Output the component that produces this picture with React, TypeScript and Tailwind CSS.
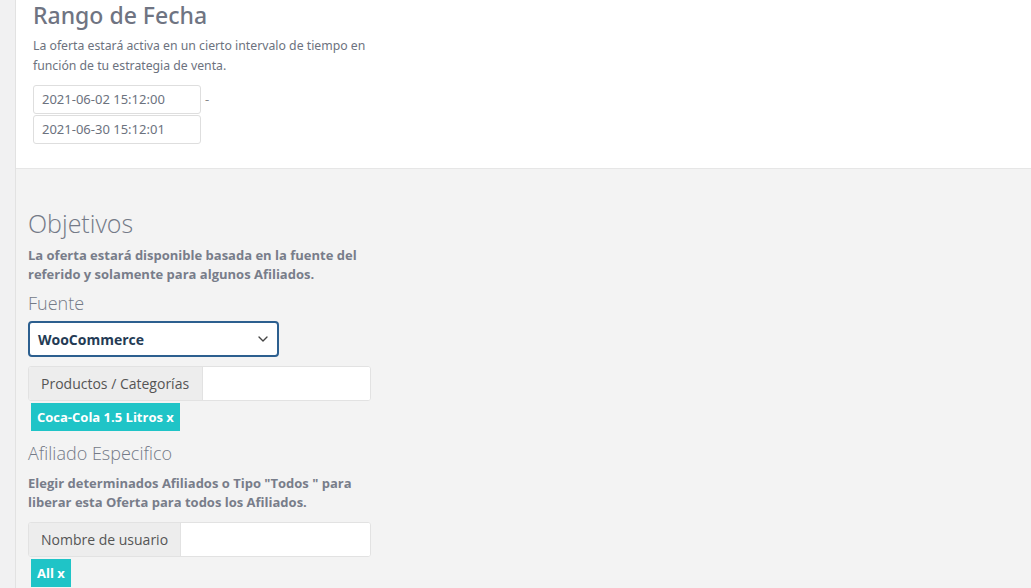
import React from "react";

const Tag = ({ label }: { label: string }) => (
  <span className="inline-block bg-[#1fc4c7] text-white font-bold text-[13px] leading-[28px] px-[6px] h-[28px]">
    {label} x
  </span>
);

const InputGroup = ({ addon, width }: { addon: string; width: string }) => (
  <div className="flex h-[35px] w-[343px] rounded-[3px] border border-[#e2e2e2] bg-white overflow-hidden">
    <div
      className={`${width} shrink-0 whitespace-nowrap flex items-center bg-[#ededed] border-r border-[#e2e2e2] px-[12px] text-[14px] text-[#555]`}
    >
      {addon}
    </div>
    <input className="flex-1 min-w-0 outline-none bg-white" />
  </div>
);

const App = () => {
  return (
    <div className="flex h-[588px] w-full overflow-hidden" style={{ fontFamily: "'Open Sans', 'Noto Sans', sans-serif" }}>
      <div className="w-[16px] shrink-0 bg-[#f1f1f2] border-r border-[#e2e2e2]" />
      <div className="flex-1 flex flex-col">
        <section
          className="h-[169px] shrink-0 bg-white border-b border-[#e6e6e6] pl-[17px]"
          style={{ fontFamily: "'Noto Sans', 'Open Sans', sans-serif" }}
        >
          <h2 className="text-[23px] leading-[30px] font-medium text-[#6f7482]">
            Rango de Fecha
          </h2>
          <p className="mt-[6px] text-[12.25px] leading-[20px] text-[#6c727e] w-[360px]">
            La oferta estará activa en un cierto intervalo de tiempo en función de tu estrategia de venta.
          </p>
          <div className="mt-[9px] flex items-center">
            <div className="w-[168px] h-[29px] rounded-[3px] border border-[#dedede] px-[8px] flex items-center text-[13px] text-[#6c727e]">
              2021-06-02 15:12:00
            </div>
            <span className="ml-[4px] text-[13px] text-[#888]">-</span>
          </div>
          <div className="mt-px w-[168px] h-[29px] rounded-[3px] border border-[#dedede] px-[8px] flex items-center text-[13px] text-[#6c727e]">
            2021-06-30 15:12:01
          </div>
        </section>
        <section className="flex-1 bg-[#f3f3f3] pl-[12px] pt-[38px]">
          <h2 className="text-[25px] leading-[32px] font-light text-[#747a87]">Objetivos</h2>
          <p className="mt-[7px] w-[345px] text-[13px] leading-[19px] font-bold text-[#787d8a]">
            La oferta estará disponible basada en la fuente del referido y solamente para algunos Afiliados.
          </p>
          <h3 className="mt-[7px] text-[18px] leading-[24px] font-light text-[#747a87]">Fuente</h3>
          <div className="mt-[6px] w-[251px] h-[36px] rounded-[4px] border-2 border-[#2c5f8f] bg-white flex items-center justify-between pl-[8px] pr-[6px]">
            <span className="text-[14px] font-bold text-[#243b55]">WooCommerce</span>
            <svg width="16" height="16" viewBox="0 0 24 24" fill="none" stroke="#444" strokeWidth="2" strokeLinecap="round" strokeLinejoin="round">
              <path d="M6 9l6 6 6-6" />
            </svg>
          </div>
          <div className="mt-[9px]">
            <InputGroup addon="Productos / Categorías" width="w-[174px]" />
          </div>
          <div className="mt-[2px] pl-[3px] h-[28px]">
            <Tag label="Coca-Cola 1.5 Litros" />
          </div>
          <h3 className="mt-[10px] text-[18px] leading-[24px] font-light text-[#747a87]">Afiliado Especifico</h3>
          <p className="mt-[9px] w-[345px] text-[13px] leading-[19px] font-bold text-[#787d8a]">
            Elegir determinados Afiliados o Tipo "Todos " para liberar esta Oferta para todos los Afiliados.
          </p>
          <div className="mt-[10px]">
            <InputGroup addon="Nombre de usuario" width="w-[152px]" />
          </div>
          <div className="mt-[2px] pl-[3px]">
            <Tag label="All" />
          </div>
        </section>
      </div>
    </div>
  );
};

export default App;
